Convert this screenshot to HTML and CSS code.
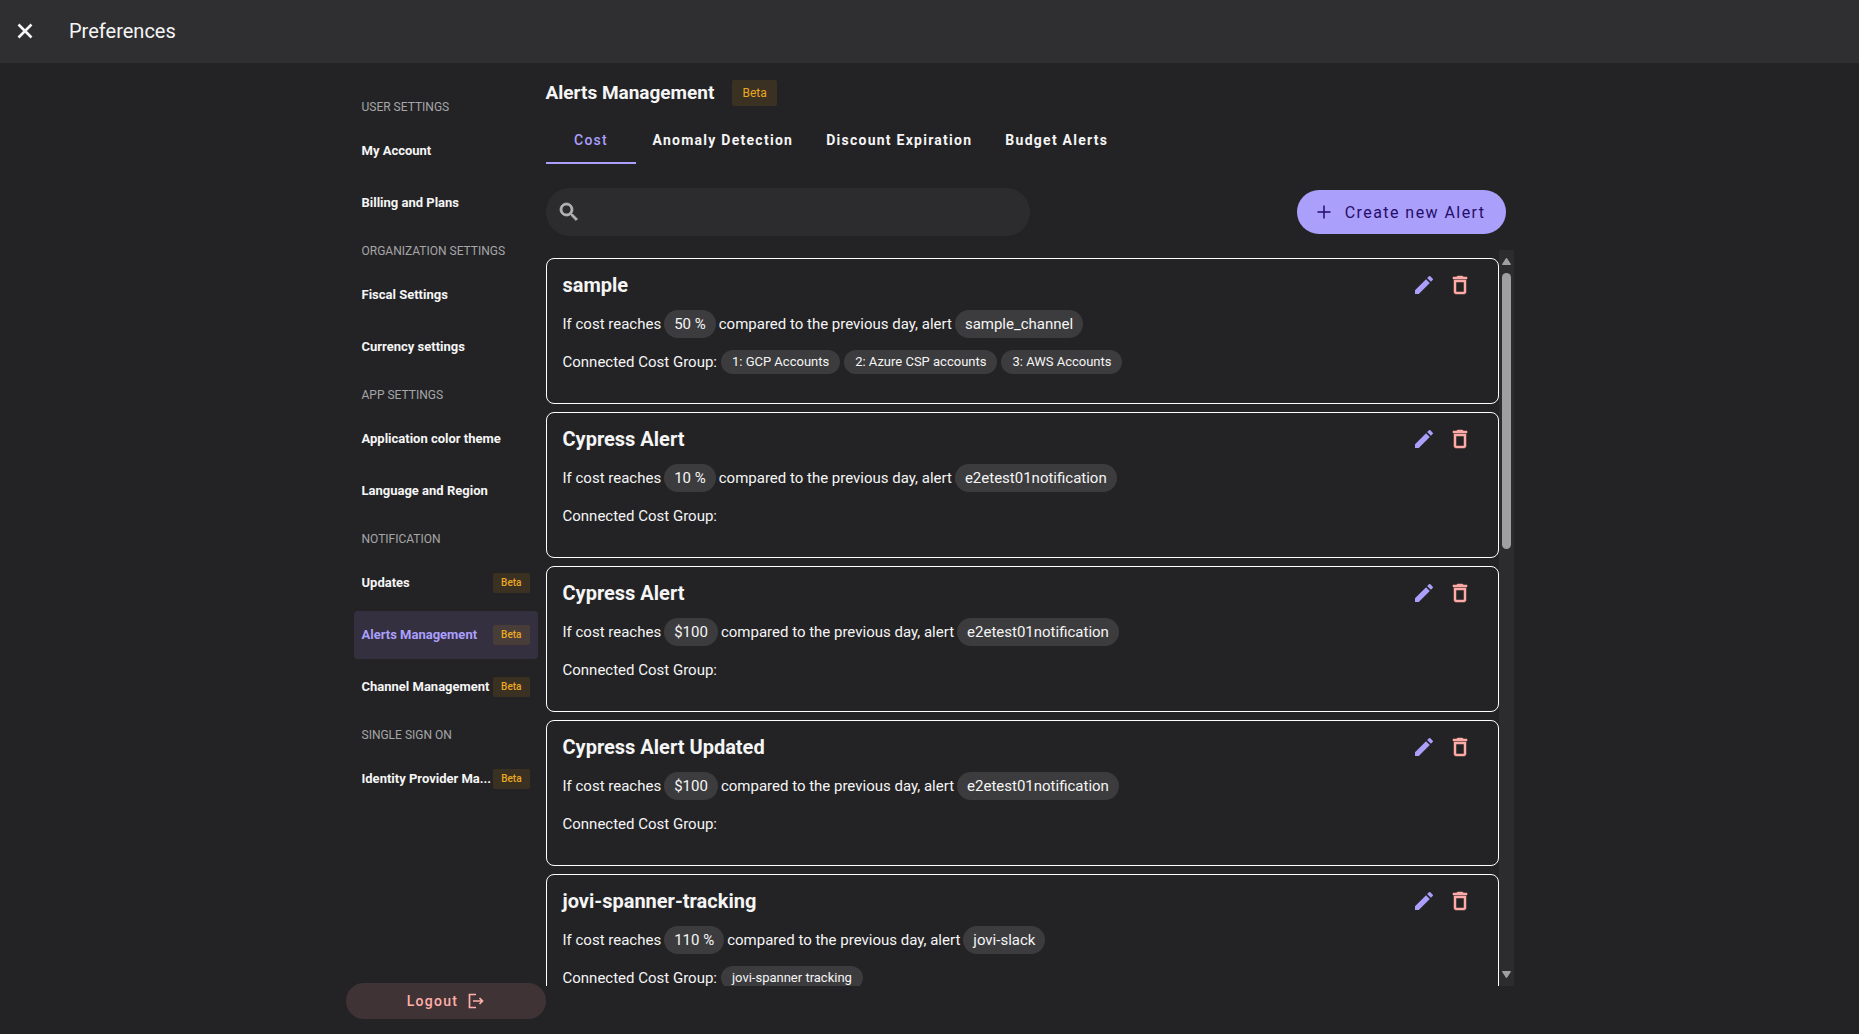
FILE: index.html
```html
<!DOCTYPE html>
<html lang="en">
<head>
  <meta charset="UTF-8" />
  <meta name="viewport" content="width=device-width, initial-scale=1.0" />
  <title>Preferences</title>
  <link rel="stylesheet" href="styles.css">
</head>
<body>
  <svg class="sprite" aria-hidden="true">
    <symbol id="icon-edit" viewBox="0 0 24 24"><path d="M3 17.25V21h3.75L17.81 9.94l-3.75-3.75L3 17.25zM20.71 7.04a1 1 0 0 0 0-1.41l-2.34-2.34a1 1 0 0 0-1.41 0l-1.83 1.83 3.75 3.75 1.83-1.83z"/></symbol>
    <symbol id="icon-delete" viewBox="0 0 24 24"><path stroke="currentColor" stroke-width=".5" d="M6 19c0 1.1.9 2 2 2h8c1.1 0 2-.9 2-2V7H6v12zM8 9h8v10H8V9zm7.500-5l-1-1h-5l-1 1H5v2h14V4h-3.500z"/></symbol>
  </svg>

  <header class="topbar">
    <button class="close-btn" aria-label="Close">
      <svg viewBox="0 0 24 24" width="24" height="24"><path d="M5.500 5.500l13 13M18.500 5.500l-13 13" stroke="currentColor" stroke-width="2.600" fill="none"/></svg>
    </button>
    <h1>Preferences</h1>
  </header>

  <div class="layout">
    <aside class="sidebar">
      <nav>
        <h2>User settings</h2>
        <a href="#account"><span>My Account</span></a>
        <a href="#billing"><span>Billing and Plans</span></a>
        <h2>Organization settings</h2>
        <a href="#fiscal"><span>Fiscal Settings</span></a>
        <a href="#currency"><span>Currency settings</span></a>
        <h2>App settings</h2>
        <a href="#theme"><span>Application color theme</span></a>
        <a href="#language"><span>Language and Region</span></a>
        <h2>Notification</h2>
        <a href="#updates"><span>Updates</span><em class="beta">Beta</em></a>
        <a href="#alerts" class="active" aria-current="page"><span>Alerts Management</span><em class="beta">Beta</em></a>
        <a href="#channels"><span>Channel Management</span><em class="beta">Beta</em></a>
        <h2>Single sign on</h2>
        <a href="#idp" title="Identity Provider Management"><span>Identity Provider Ma...</span><em class="beta">Beta</em></a>
      </nav>
      <button class="logout">
        Logout
        <svg viewBox="0 0 16 16" width="16" height="16"><path d="M8 1.500H1.500v13H8M5 8h9.500M11.500 5l3 3-3 3" stroke="currentColor" stroke-width="1.700" fill="none"/></svg>
      </button>
    </aside>

    <main class="content">
      <div class="title">
        <h2>Alerts Management</h2>
        <em class="beta beta-large">Beta</em>
      </div>

      <div class="tabs" role="tablist">
        <button role="tab" class="tab active" aria-selected="true">Cost</button>
        <button role="tab" class="tab" aria-selected="false">Anomaly Detection</button>
        <button role="tab" class="tab" aria-selected="false">Discount Expiration</button>
        <button role="tab" class="tab" aria-selected="false">Budget Alerts</button>
      </div>

      <div class="toolbar">
        <label class="search">
          <svg viewBox="0 0 24 24" width="24" height="24"><path stroke="currentColor" stroke-width=".8" d="M15.500 14h-.79l-.28-.27A6.470 6.470 0 0 0 16 9.500 6.500 6.500 0 1 0 9.500 16c1.610 0 3.090-.59 4.230-1.570l.27.28v.79l5 4.990L20.490 19l-4.990-5zm-6 0C7.010 14 5 11.990 5 9.500S7.010 5 9.500 5 14 7.010 14 9.500 11.990 14 9.500 14z"/></svg>
          <input type="text" aria-label="Search alerts" />
        </label>
        <button class="create-btn">
          <svg viewBox="0 0 14 14" width="14" height="14"><path d="M7 .5v13M.5 7h13" stroke="currentColor" stroke-width="1.500" fill="none"/></svg>
          Create new Alert
        </button>
      </div>

      <div class="scroller">
        <div class="alert-list">
          <article class="alert">
            <div class="alert-head">
              <h3>sample</h3>
              <button class="edit" aria-label="Edit"><svg><use href="#icon-edit"/></svg></button>
              <button class="delete" aria-label="Delete"><svg><use href="#icon-delete"/></svg></button>
            </div>
            <p class="rule">If cost reaches <span class="chip">50 %</span> compared to the previous day, alert <span class="chip">sample_channel</span></p>
            <p class="groups"><span class="label">Connected Cost Group:</span> <span class="chip small">1: GCP Accounts</span> <span class="chip small">2: Azure CSP accounts</span> <span class="chip small">3: AWS Accounts</span></p>
          </article>
          <article class="alert">
            <div class="alert-head">
              <h3>Cypress Alert</h3>
              <button class="edit" aria-label="Edit"><svg><use href="#icon-edit"/></svg></button>
              <button class="delete" aria-label="Delete"><svg><use href="#icon-delete"/></svg></button>
            </div>
            <p class="rule">If cost reaches <span class="chip">10 %</span> compared to the previous day, alert <span class="chip">e2etest01notification</span></p>
            <p class="groups"><span class="label">Connected Cost Group:</span></p>
          </article>
          <article class="alert">
            <div class="alert-head">
              <h3>Cypress Alert</h3>
              <button class="edit" aria-label="Edit"><svg><use href="#icon-edit"/></svg></button>
              <button class="delete" aria-label="Delete"><svg><use href="#icon-delete"/></svg></button>
            </div>
            <p class="rule">If cost reaches <span class="chip">$100</span> compared to the previous day, alert <span class="chip">e2etest01notification</span></p>
            <p class="groups"><span class="label">Connected Cost Group:</span></p>
          </article>
          <article class="alert">
            <div class="alert-head">
              <h3>Cypress Alert Updated</h3>
              <button class="edit" aria-label="Edit"><svg><use href="#icon-edit"/></svg></button>
              <button class="delete" aria-label="Delete"><svg><use href="#icon-delete"/></svg></button>
            </div>
            <p class="rule">If cost reaches <span class="chip">$100</span> compared to the previous day, alert <span class="chip">e2etest01notification</span></p>
            <p class="groups"><span class="label">Connected Cost Group:</span></p>
          </article>
          <article class="alert">
            <div class="alert-head">
              <h3>jovi-spanner-tracking</h3>
              <button class="edit" aria-label="Edit"><svg><use href="#icon-edit"/></svg></button>
              <button class="delete" aria-label="Delete"><svg><use href="#icon-delete"/></svg></button>
            </div>
            <p class="rule">If cost reaches <span class="chip">110 %</span> compared to the previous day, alert <span class="chip">jovi-slack</span></p>
            <p class="groups"><span class="label">Connected Cost Group:</span> <span class="chip small">jovi-spanner tracking</span></p>
          </article>
        </div>
        <div class="scrollbar" aria-hidden="true">
          <svg viewBox="0 0 9 7" width="9" height="7"><path d="M3.800.5q.7-.8 1.400 0L8.800 6q.4 1-.5 1H.7q-.9 0-.5-1z"/></svg>
          <div class="track"><div class="thumb"></div></div>
          <svg viewBox="0 0 9 7" width="9" height="7"><path d="M3.800 6.500q.7.800 1.400 0L8.800 1q.4-1-.5-1H.7Q-.2 0 .2 1z"/></svg>
        </div>
      </div>
    </main>
  </div>
</body>
</html>
```
FILE: styles.css
```css
* {
  box-sizing: border-box;
}
body {
  margin: 0;
  height: 100vh;
  display: flex;
  flex-direction: column;
  overflow: hidden;
  background-color: #232325;
  color: #f5f5f5;
  font-family: Roboto, sans-serif;
  font-size: 15px;
  font-weight: 400;
}
h1, h2, h3, p {
  margin: 0;
}
button {
  font: inherit;
  color: inherit;
  background: none;
  border: none;
  padding: 0;
  cursor: pointer;
}
svg {
  display: block;
  fill: currentColor;
  flex: none;
}
.sprite {
  display: none;
}

/* top bar */
.topbar {
  flex: none;
  display: flex;
  align-items: center;
  gap: 32px;
  height: 63px;
  padding: 0 13px 2px;
  background-color: #2f2f31;
}
.topbar h1 {
  font-size: 20px;
  font-weight: 400;
  line-height: 24px;
}

.layout {
  flex: 1;
  min-height: 0;
  width: 100%;
  max-width: 1168px;
  margin: 0 auto;
  display: flex;
}

/* sidebar */
.sidebar {
  flex: none;
  width: 200px;
  display: flex;
  flex-direction: column;
  justify-content: space-between;
  padding: 22px 0 15px;
}
.sidebar nav {
  display: flex;
  flex-direction: column;
  padding: 0 8px;
}
.sidebar h2 {
  height: 40px;
  padding: 4px 8px 0;
  color: #a6a6a8;
  font-size: 12px;
  font-weight: 400;
  line-height: 36px;
  text-transform: uppercase;
}
.sidebar a {
  display: flex;
  align-items: center;
  justify-content: space-between;
  gap: 2px;
  height: 48px;
  margin: 2px 0;
  padding: 0 8px;
  border-radius: 4px;
  color: #f5f5f5;
  font-size: 13px;
  font-weight: 700;
  text-decoration: none;
}
.sidebar a span {
  padding-bottom: 2px;
  white-space: nowrap;
}
.sidebar a.active {
  background-color: #34303f;
  color: #ab9ffc;
}
.beta {
  flex: none;
  padding: 0 8px;
  border-radius: 2px;
  background-color: #3b3122;
  color: #eca823;
  font-size: 10px;
  font-style: normal;
  font-weight: 500;
  line-height: 20px;
}
.active .beta {
  background-color: #493d3a;
}
.beta-large {
  padding: 0 10px;
  font-size: 12px;
  font-weight: 400;
  line-height: 26px;
}
.logout {
  display: flex;
  align-items: center;
  justify-content: center;
  gap: 10px;
  height: 36px;
  border-radius: 18px;
  background-color: #3f3335;
  color: #ffb0ab;
  font-size: 14px;
  font-weight: 500;
  letter-spacing: 0.09em;
}

/* main column */
.content {
  flex: 1;
  min-width: 0;
  display: flex;
  flex-direction: column;
  padding: 17px 0 48px;
}
.title {
  display: flex;
  align-items: center;
  gap: 18px;
}
.title h2 {
  font-size: 19px;
  font-weight: 700;
  line-height: 24px;
}
.tabs {
  display: flex;
  margin-top: 10px;
}
.tab {
  min-width: 90px;
  height: 48px;
  padding: 2px 16px 0 17px;
  border-bottom: 2px solid transparent;
  font-size: 14px;
  font-weight: 700;
  letter-spacing: 0.09em;
}
.tab.active {
  border-color: #ab9ffc;
  color: #ab9ffc;
  font-weight: 500;
}
.toolbar {
  display: flex;
  align-items: center;
  justify-content: space-between;
  margin-top: 24px;
}
.search {
  display: flex;
  align-items: center;
  gap: 8px;
  width: 50%;
  height: 48px;
  padding: 0 11px;
  border-radius: 24px;
  background-color: #2c2c2e;
  color: #b4b4b6;
}
.search input {
  flex: 1;
  border: none;
  outline: none;
  background: none;
  color: #f5f5f5;
  font: inherit;
}
.create-btn {
  display: flex;
  align-items: center;
  gap: 14px;
  height: 44px;
  margin-right: 8px;
  padding: 0 20px;
  border-radius: 22px;
  background-color: #ab9ffc;
  color: #260d68;
  font-size: 16px;
  letter-spacing: 0.09em;
}

/* alert cards */
.scroller {
  flex: 1;
  min-height: 0;
  display: flex;
  margin-top: 14px;
}
.alert-list {
  flex: 1;
  padding-top: 8px;
  overflow-y: auto;
  scrollbar-width: none;
}
.alert {
  min-height: 146px;
  margin-bottom: 8px;
  padding: 14px 26px 0 16px;
  border: 1px solid #fff;
  border-radius: 8px;
}
.alert-head {
  display: flex;
  align-items: center;
  gap: 12px;
}
.alert-head h3 {
  flex: 1;
  font-size: 20px;
  font-weight: 700;
  line-height: 24px;
}
.alert-head svg {
  width: 24px;
  height: 24px;
}
.edit {
  color: #ab9ffc;
}
.delete {
  color: #ffaba6;
}
.rule, .groups {
  display: flex;
  align-items: center;
  gap: 4px;
}
.rule {
  gap: 3px;
  margin-top: 13px;
}
.groups {
  min-height: 24px;
  margin-top: 12px;
}
.chip {
  padding: 0 10px;
  border-radius: 14px;
  background-color: #3c3c3e;
  line-height: 28px;
}
.chip.small {
  padding: 0 11px;
  border-radius: 12px;
  font-size: 13px;
  line-height: 24px;
}

/* scrollbar */
.scrollbar {
  flex: none;
  width: 15px;
  display: flex;
  flex-direction: column;
  align-items: center;
  gap: 8px;
  padding: 8px 0;
  background-color: #2c2c2c;
  color: #9f9f9f;
}
.track {
  flex: 1;
  width: 9px;
}
.thumb {
  height: 40%;
  border-radius: 5px;
  background-color: #9f9f9f;
}
```
